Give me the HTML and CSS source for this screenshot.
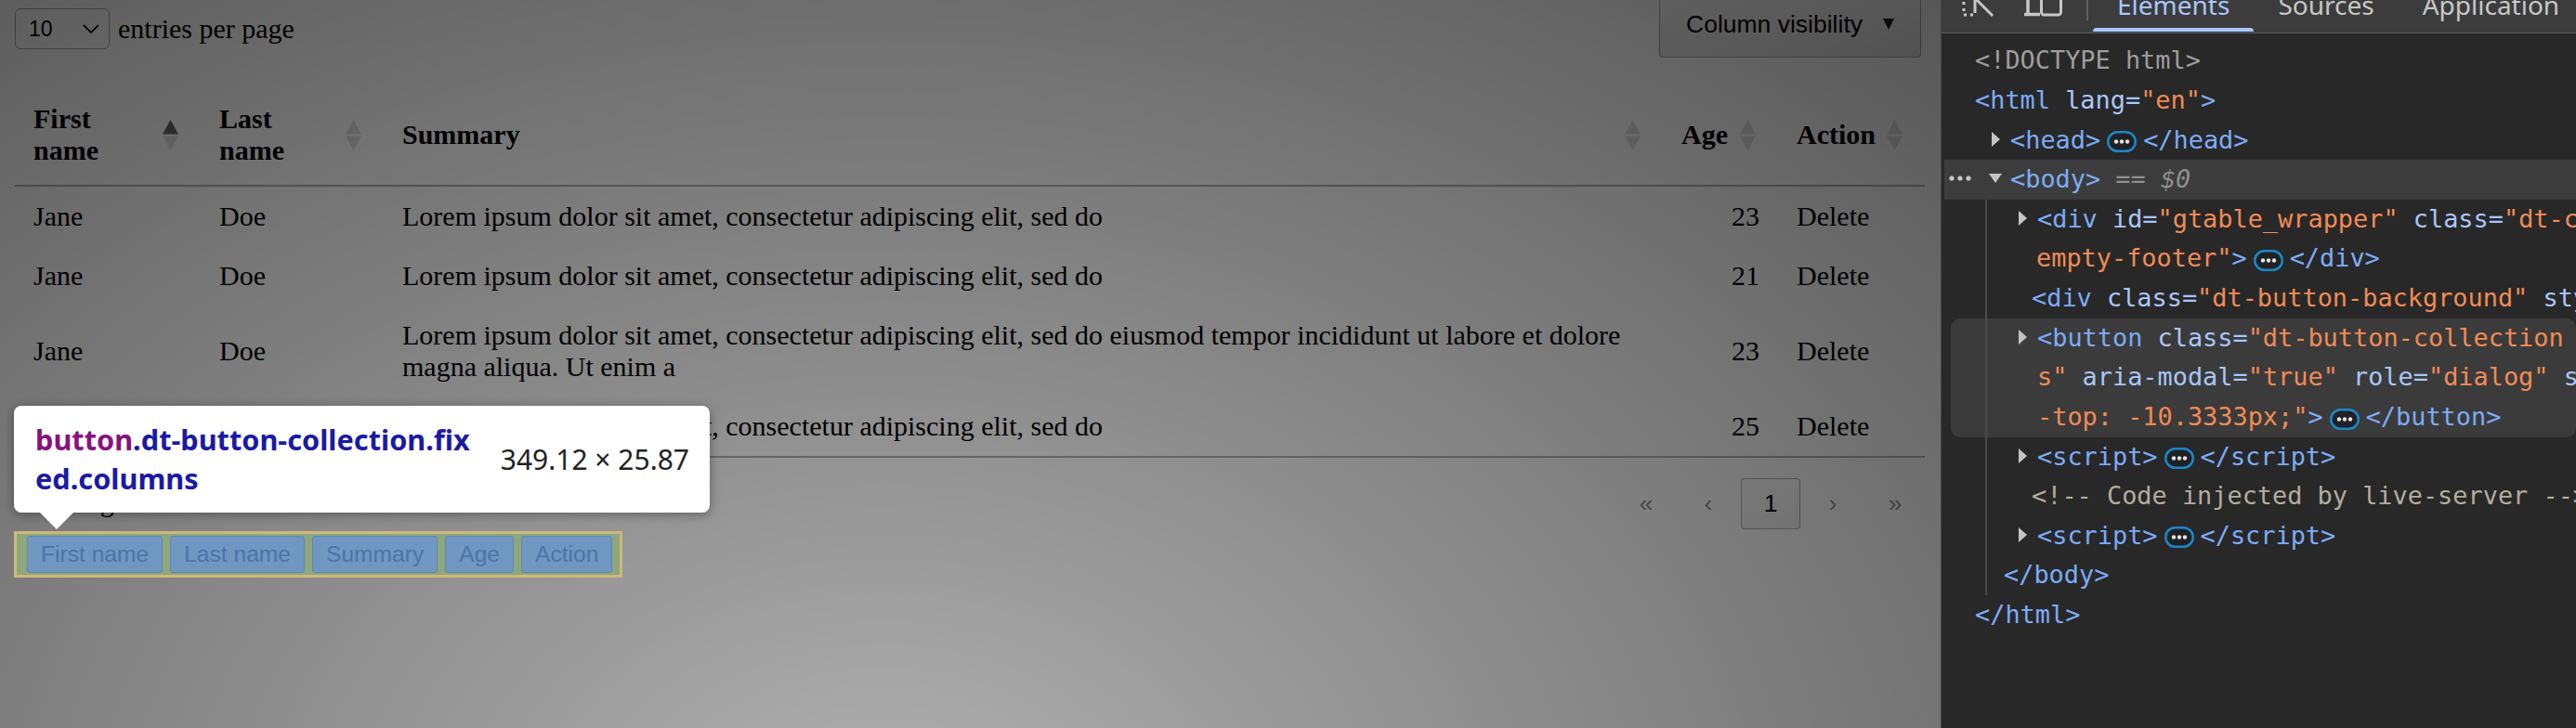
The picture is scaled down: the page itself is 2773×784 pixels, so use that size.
FILE: index.html
```html
<!DOCTYPE html>
<html lang="en">
<head>
<meta charset="utf-8">
<title>DataTables column visibility</title>
<link rel="stylesheet" href="styles.css">
</head>
<body>
<div class="screen">
  <main class="page">
    <div class="dt-container">
      <div class="dt-top">
        <div class="dt-length">
          <div class="dt-select"><span>10</span><svg class="chev" width="18" height="10" viewBox="0 0 18 10"><path d="M1 1 L9 9 L17 1" fill="none" stroke="#222" stroke-width="2"/></svg></div>
          <label>entries per page</label>
        </div>
        <button class="colvis"><span>Column visibility</span><svg class="caret" width="12" height="12" viewBox="0 0 12 12"><polygon points="0,0 12,0 6,12" fill="#222"/></svg></button>
      </div>
      <table class="dataTable">
        <colgroup><col class="c1"><col class="c2"><col class="c3"><col class="c4"><col class="c5"></colgroup>
        <thead>
          <tr>
            <th>First name<span class="order"><svg width="17" height="33" viewBox="0 0 17 33"><polygon class="on" points="8.5,0 17,15.5 0,15.5"/><polygon class="off" points="0,17.5 17,17.5 8.5,33"/></svg></span></th>
            <th>Last name<span class="order"><svg width="17" height="33" viewBox="0 0 17 33"><polygon class="off" points="8.5,0 17,15.5 0,15.5"/><polygon class="off" points="0,17.5 17,17.5 8.5,33"/></svg></span></th>
            <th>Summary<span class="order"><svg width="17" height="33" viewBox="0 0 17 33"><polygon class="off" points="8.5,0 17,15.5 0,15.5"/><polygon class="off" points="0,17.5 17,17.5 8.5,33"/></svg></span></th>
            <th class="num">Age<span class="order"><svg width="17" height="33" viewBox="0 0 17 33"><polygon class="off" points="8.5,0 17,15.5 0,15.5"/><polygon class="off" points="0,17.5 17,17.5 8.5,33"/></svg></span></th>
            <th>Action<span class="order"><svg width="17" height="33" viewBox="0 0 17 33"><polygon class="off" points="8.5,0 17,15.5 0,15.5"/><polygon class="off" points="0,17.5 17,17.5 8.5,33"/></svg></span></th>
          </tr>
        </thead>
        <tbody>
          <tr><td>Jane</td><td>Doe</td><td>Lorem ipsum dolor sit amet, consectetur adipiscing elit, sed do</td><td class="num">23</td><td>Delete</td></tr>
          <tr><td>Jane</td><td>Doe</td><td>Lorem ipsum dolor sit amet, consectetur adipiscing elit, sed do</td><td class="num">21</td><td>Delete</td></tr>
          <tr><td>Jane</td><td>Doe</td><td>Lorem ipsum dolor sit amet, consectetur adipiscing elit, sed do eiusmod tempor incididunt ut labore et dolore magna aliqua. Ut enim a</td><td class="num">23</td><td>Delete</td></tr>
          <tr><td>Jane</td><td>Doe</td><td>Lorem ipsum dolor sit amet, consectetur adipiscing elit, sed do</td><td class="num">25</td><td>Delete</td></tr>
        </tbody>
      </table>
      <div class="dt-bottom">
        <div class="dt-info">Showing 1 to 4 of 4 entries</div>
        <nav class="dt-paging">
          <span class="pbtn disabled">«</span>
          <span class="pbtn disabled">‹</span>
          <span class="pbtn current">1</span>
          <span class="pbtn disabled">›</span>
          <span class="pbtn disabled">»</span>
        </nav>
      </div>
    </div>

    <div class="dt-button-background"></div>

    <div class="dt-button-collection">
      <span class="col-btn">First name</span>
      <span class="col-btn">Last name</span>
      <span class="col-btn">Summary</span>
      <span class="col-btn">Age</span>
      <span class="col-btn">Action</span>
    </div>

    <div class="inspect-tip">
      <div class="tip-sel"><span class="tip-tag">button</span>.dt-button-collection.fix<br>ed.columns</div>
      <div class="tip-dim">349.12 × 25.87</div>
    </div>
  </main>

  <aside class="devtools">
    <div class="tabbar">
      <svg class="ico-inspect" width="34" height="36" viewBox="0 0 34 36"><path d="M2 4 V32 M2 32 H12" fill="none" stroke="#c7c7c7" stroke-width="3" stroke-dasharray="3 4"/><path d="M14 14 V30 M14 14 H30 M15 15 L33 33" fill="none" stroke="#c7c7c7" stroke-width="3"/></svg>
      <svg class="ico-device" width="41" height="36" viewBox="0 0 41 36"><path d="M4 2 V31.5 M0 31.5 H17" fill="none" stroke="#c7c7c7" stroke-width="3.5"/><rect x="18.5" y="4" width="21" height="28" rx="3" fill="none" stroke="#c7c7c7" stroke-width="3"/></svg>
      <span class="tab-sep"></span>
      <div class="tab active"><span>Elements</span></div>
      <div class="tab"><span>Sources</span></div>
      <div class="tab"><span>Application</span></div>
    </div>
    <div class="tree">
      <div class="ln p36"><span class="doc">&lt;!DOCTYPE html&gt;</span></div>
      <div class="ln p36"><span class="t">&lt;html</span> <span class="a">lang</span><span class="a">=</span><span class="v">"en"</span><span class="t">&gt;</span></div>
      <div class="ln p54"><svg class="tri-r" width="9" height="16" viewBox="0 0 9 16"><polygon points="0,0 9,8 0,16"/></svg><span class="t">&lt;head&gt;</span><svg class="badge" width="32" height="23" viewBox="0 0 32 23"><rect x="1.25" y="1.25" width="29.5" height="20.5" rx="10.25"/><circle cx="10" cy="11.5" r="2.2"/><circle cx="16" cy="11.5" r="2.2"/><circle cx="22" cy="11.5" r="2.2"/></svg><span class="t">&lt;/head&gt;</span></div>
      <div class="ln sel"><svg class="dots" width="24" height="6" viewBox="0 0 24 6"><circle cx="3" cy="3" r="2.6"/><circle cx="12" cy="3" r="2.6"/><circle cx="21" cy="3" r="2.6"/></svg><svg class="tri-d" width="14" height="10" viewBox="0 0 14 10"><polygon points="0,0 14,0 7,10"/></svg><span class="t">&lt;body&gt;</span> <span class="eq">== $0</span></div>
      <div class="kids">
        <div class="ln p36"><svg class="tri-r" width="9" height="16" viewBox="0 0 9 16"><polygon points="0,0 9,8 0,16"/></svg><span class="t">&lt;div</span> <span class="a">id=</span><span class="v">"gtable_wrapper"</span> <span class="a">class=</span><span class="v">"dt-container dt-</span></div>
        <div class="ln p55"><span class="v">empty-footer"</span><span class="t">&gt;</span><svg class="badge" width="32" height="23" viewBox="0 0 32 23"><rect x="1.25" y="1.25" width="29.5" height="20.5" rx="10.25"/><circle cx="10" cy="11.5" r="2.2"/><circle cx="16" cy="11.5" r="2.2"/><circle cx="22" cy="11.5" r="2.2"/></svg><span class="t">&lt;/div&gt;</span></div>
        <div class="ln p50"><span class="t">&lt;div</span> <span class="a">class=</span><span class="v">"dt-button-background"</span> <span class="a">style=</span><span class="v">"z-index: 2001;"</span></div>
        <div class="hover-block">
          <div class="ln p73"><svg class="tri-r" width="9" height="16" viewBox="0 0 9 16"><polygon points="0,0 9,8 0,16"/></svg><span class="t">&lt;button</span> <span class="a">class=</span><span class="v">"dt-button-collection fixed column</span></div>
          <div class="ln p93"><span class="v">s"</span> <span class="a">aria-modal=</span><span class="v">"true"</span> <span class="a">role=</span><span class="v">"dialog"</span> <span class="a">style=</span><span class="v">"top: 0px; margin</span></div>
          <div class="ln p93"><span class="v">-top: -10.3333px;"</span><span class="t">&gt;</span><svg class="badge" width="32" height="23" viewBox="0 0 32 23"><rect x="1.25" y="1.25" width="29.5" height="20.5" rx="10.25"/><circle cx="10" cy="11.5" r="2.2"/><circle cx="16" cy="11.5" r="2.2"/><circle cx="22" cy="11.5" r="2.2"/></svg><span class="t">&lt;/button&gt;</span></div>
        </div>
        <div class="ln p36"><svg class="tri-r" width="9" height="16" viewBox="0 0 9 16"><polygon points="0,0 9,8 0,16"/></svg><span class="t">&lt;script&gt;</span><svg class="badge" width="32" height="23" viewBox="0 0 32 23"><rect x="1.25" y="1.25" width="29.5" height="20.5" rx="10.25"/><circle cx="10" cy="11.5" r="2.2"/><circle cx="16" cy="11.5" r="2.2"/><circle cx="22" cy="11.5" r="2.2"/></svg><span class="t">&lt;/script&gt;</span></div>
        <div class="ln p50"><span class="cm">&lt;!-- Code injected by live-server --&gt;</span></div>
        <div class="ln p36"><svg class="tri-r" width="9" height="16" viewBox="0 0 9 16"><polygon points="0,0 9,8 0,16"/></svg><span class="t">&lt;script&gt;</span><svg class="badge" width="32" height="23" viewBox="0 0 32 23"><rect x="1.25" y="1.25" width="29.5" height="20.5" rx="10.25"/><circle cx="10" cy="11.5" r="2.2"/><circle cx="16" cy="11.5" r="2.2"/><circle cx="22" cy="11.5" r="2.2"/></svg><span class="t">&lt;/script&gt;</span></div>
        <div class="ln p20"><span class="t">&lt;/body&gt;</span></div>
      </div>
      <div class="ln p36"><span class="t">&lt;/html&gt;</span></div>
    </div>
  </aside>
</div>
</body>
</html>
```

FILE: styles.css
```css
* { box-sizing: border-box; }
html, body { margin: 0; padding: 0; }
body { width: 2773px; height: 784px; overflow: hidden; background: #282828; }

.screen { display: flex; width: 2773px; height: 784px; }

/* ---------- page ---------- */
.page {
  position: relative;
  flex: none;
  width: 2089px;
  height: 784px;
  overflow: hidden;
  background: #fff;
  color: #000;
  font-family: "Liberation Serif", "Times New Roman", serif;
  font-size: 30px;
}
.dt-container { padding: 0 17px 0 16px; }

.dt-top { display: flex; justify-content: space-between; align-items: flex-start; height: 62px; }
.dt-length { display: flex; align-items: center; margin-top: 9px; }
.dt-select {
  width: 102px; height: 44px;
  border: 1.5px solid #a9a9a9; border-radius: 6px;
  display: flex; align-items: center; justify-content: space-between;
  padding: 0 10px 0 14px;
  font: 23px "Liberation Sans", Arial, sans-serif;
}
.dt-length label { margin-left: 9px; }

.colvis {
  margin-top: -9px; margin-right: 4px;
  height: 71px; padding: 0 28px;
  border: 1.5px solid rgba(0,0,0,.3); border-radius: 4px;
  background: linear-gradient(to bottom, rgba(230,230,230,.1) 0%, rgba(0,0,0,.1) 100%);
  font: 26.5px "Liberation Sans", Arial, sans-serif; color: #000;
  display: flex; align-items: center;
}
.caret { margin-left: 22px; margin-top: -2px; }

table.dataTable {
  width: 100%; table-layout: fixed; border-collapse: collapse;
  margin-top: 29px;
  border-bottom: 2px solid rgba(0,0,0,.3);
}
.c1 { width: 200px; } .c2 { width: 197px; } .c3 { width: 1377px; } .c4 { width: 124px; } .c5 { width: 158px; }
.dataTable th {
  position: relative;
  padding: 20px 60px 20px 20px;
  text-align: left; font-weight: bold; line-height: 34px; vertical-align: middle;
  border-bottom: 2px solid rgba(0,0,0,.3);
}
.dataTable td { padding: 15px 20px; line-height: 34px; vertical-align: middle; }
.dataTable .num { text-align: right; }
.order { position: absolute; top: 0; bottom: 0; right: 24px; width: 17px; display: flex; align-items: center; }
.order .on { fill: rgba(0,0,0,.6); }
.order .off { fill: rgba(0,0,0,.125); }

.dt-bottom { display: flex; justify-content: space-between; align-items: flex-start; margin-top: 22px; }
.dt-info { margin-top: 9px; line-height: 34px; }
.dt-paging { display: flex; gap: 3px; font: 26.5px "Liberation Sans", Arial, sans-serif; }
.pbtn {
  width: 64px; height: 55px;
  display: flex; align-items: center; justify-content: center;
  border: 1.5px solid transparent; border-radius: 4px;
}
.pbtn.disabled { color: rgba(0,0,0,.45); }
.pbtn.current { border-color: rgba(0,0,0,.3); background: linear-gradient(to bottom, rgba(230,230,230,.05), rgba(0,0,0,.05)); }

/* modal backdrop of the collection */
.dt-button-background {
  position: absolute; inset: 0; z-index: 1;
  background: radial-gradient(ellipse 1900px 1350px at 950px 900px, rgba(0,0,0,.3) 0%, rgba(0,0,0,.7) 100%);
}

/* highlighted collection (devtools box model tint) */
.dt-button-collection {
  position: absolute; left: 15px; top: 571.5px; z-index: 2;
  width: 655px; height: 50px;
  border: 3px solid #cdb87c;
  background: #8ea77c;
  padding: 2px 11px;
  display: flex; gap: 8px;
}
.col-btn {
  flex: 0 1 auto;
  height: 40px; padding: 0 14px;
  border: 1px solid #5f87b5; border-radius: 3px;
  background: #7097c2; color: #4c74a5;
  font: 24.6px "Liberation Sans", Arial, sans-serif;
  display: flex; align-items: center; white-space: nowrap;
}

/* inspect tooltip */
.inspect-tip {
  position: absolute; left: 15px; top: 437px; z-index: 3;
  width: 749px; height: 115px;
  background: #fff; border-radius: 8px;
  box-shadow: 0 2px 12px rgba(0,0,0,.35);
  display: flex; align-items: center; justify-content: space-between;
  padding: 0 22px 0 23px;
  font-family: "Noto Sans", "Open Sans", sans-serif;
}
.inspect-tip::after {
  content: ""; position: absolute; left: 28px; top: 100%;
  border-left: 18px solid transparent; border-right: 18px solid transparent;
  border-top: 18px solid #fff;
}
.tip-sel { font-weight: 700; font-size: 30.7px; line-height: 41.6px; color: #1a1aa6; }
.tip-tag { color: #881280; }
.tip-dim { font-size: 30px; color: #222; white-space: nowrap; }

/* ---------- devtools ---------- */
.devtools {
  flex: 1; min-width: 0;
  background: #282828;
  border-left: 1px solid #474747;
  overflow: hidden;
}
.tabbar {
  height: 35.5px;
  background: #3c3c3c;
  border-bottom: 1.5px solid #5b5b5b;
  display: flex; align-items: flex-start;
  padding-left: 22px;
}
.ico-inspect { margin-top: -16px; flex: none; }
.ico-device { margin-top: -16px; margin-left: 33px; flex: none; }
.tab-sep { width: 1.5px; height: 22px; background: #5f5f5f; margin-left: 26px; margin-right: 5.5px; flex: none; }
.tab {
  position: relative; height: 34px; padding: 0 26px;
  font: 28px/28px "Noto Sans", "Open Sans", sans-serif;
  color: #c7c7c7; white-space: nowrap;
}
.tab span { display: block; margin-top: -9px; }
.tab.active { color: #a8c7fa; }
.tab.active::after {
  content: ""; position: absolute; left: 0; right: 0; bottom: 0;
  height: 4.5px; background: #a8c7fa; border-radius: 4px 4px 0 0;
}

.tree {
  padding-top: 8.8px;
  font-family: "DejaVu Sans Mono", "Liberation Mono", monospace;
  font-size: 26.9px;
  color: #c7c7c7;
}
.ln { height: 42.64px; line-height: 42.64px; white-space: pre; overflow: hidden; }
.p20 { padding-left: 20px; }
.p36 { padding-left: 36px; }
.p50 { padding-left: 50px; }
.p54 { padding-left: 54px; }
.p55 { padding-left: 55px; }
.p73 { padding-left: 73px; }
.p93 { padding-left: 93px; }

.doc { color: #9e9e9e; }
.t { color: #7cacf8; }
.a { color: #a8c7fa; }
.v { color: #f28b54; }
.cm { color: #b3ad9e; }
.eq { color: #8f8f8f; font-style: italic; }

.tri-r { fill: #c4c4c4; vertical-align: 2px; margin-right: 11px; }
.tri-d { fill: #c4c4c4; vertical-align: 5px; margin-left: 19px; margin-right: 9px; }
.dots { fill: #c7c7c7; vertical-align: 7px; }
.badge { vertical-align: -4.7px; margin: 0 7px 0 7px; }
.badge rect { fill: #202124; stroke: #1b87c9; stroke-width: 2.5; }
.badge circle { fill: #e3e3e3; }

.ln.sel { margin-left: 3px; padding-left: 5px; background: #3c3c3c; }

.kids { position: relative; margin-left: 47px; }
.kids::before {
  content: ""; position: absolute; left: 0; top: 0; bottom: 0;
  width: 1.5px; background: #4a4a4a; z-index: 1;
}
.hover-block { margin-left: -37px; background: #3b3b3b; border-radius: 10px; }
```
